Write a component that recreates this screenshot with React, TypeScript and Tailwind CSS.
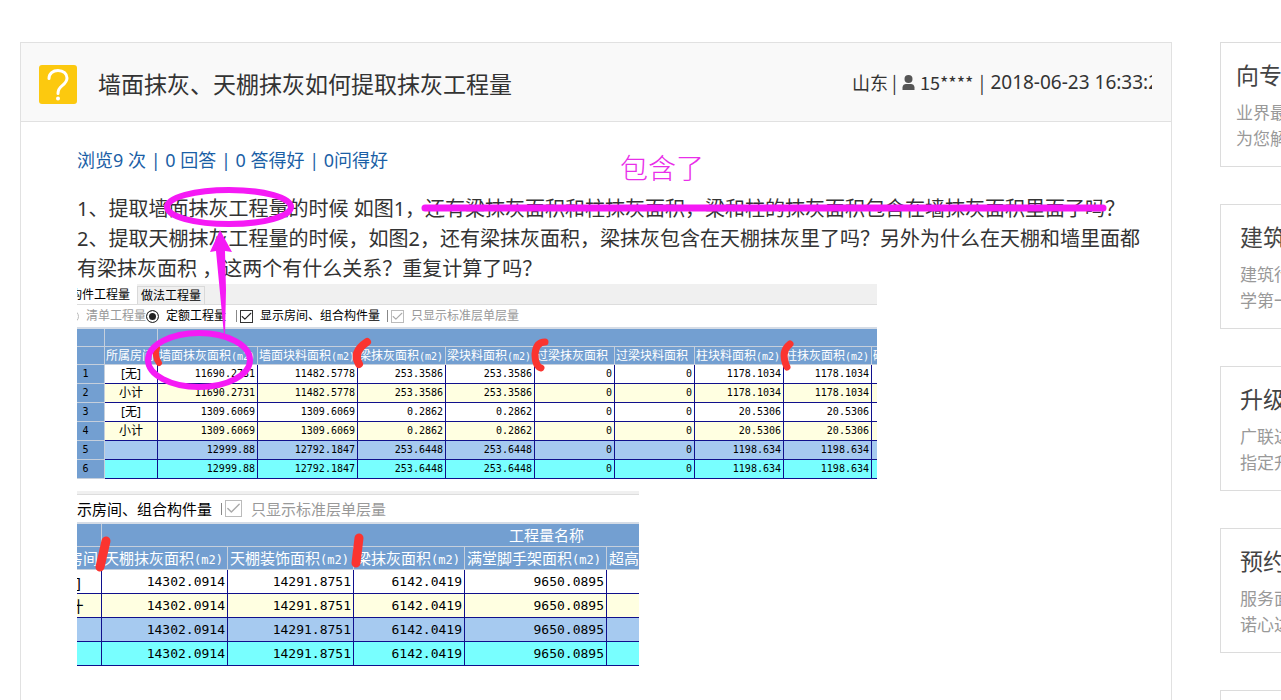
import React, { useState } from "react";
import { Check } from "lucide-react";
import clsx from "clsx";

type Tone = "plain" | "subtotal" | "floor" | "total";

type Row = { tone: Tone; cells: string[] };

type Column = { name: string; unit?: string; width: number };

const TONE_BG: Record<Tone, string> = {
  plain: "bg-white",
  subtotal: "bg-[#ffffe1]",
  floor: "bg-[#a6caf0]",
  total: "bg-[#78ffff]",
};

const WALL_COLUMNS: Column[] = [
  { name: "所属房间", width: 53 },
  { name: "墙面抹灰面积", unit: "(m2)", width: 100 },
  { name: "墙面块料面积", unit: "(m2)", width: 100 },
  { name: "梁抹灰面积", unit: "(m2)", width: 88 },
  { name: "梁块料面积", unit: "(m2)", width: 89 },
  { name: "过梁抹灰面积", width: 80 },
  { name: "过梁块料面积", width: 80 },
  { name: "柱块料面积", unit: "(m2)", width: 89 },
  { name: "柱抹灰面积", unit: "(m2)", width: 88 },
  { name: "砌", width: 20 },
];

const WALL_ROWS: Row[] = [
  { tone: "plain", cells: ["[无]", "11690.2731", "11482.5778", "253.3586", "253.3586", "0", "0", "1178.1034", "1178.1034", ""] },
  { tone: "subtotal", cells: ["小计", "11690.2731", "11482.5778", "253.3586", "253.3586", "0", "0", "1178.1034", "1178.1034", ""] },
  { tone: "plain", cells: ["[无]", "1309.6069", "1309.6069", "0.2862", "0.2862", "0", "0", "20.5306", "20.5306", ""] },
  { tone: "subtotal", cells: ["小计", "1309.6069", "1309.6069", "0.2862", "0.2862", "0", "0", "20.5306", "20.5306", ""] },
  { tone: "floor", cells: ["", "12999.88", "12792.1847", "253.6448", "253.6448", "0", "0", "1198.634", "1198.634", ""] },
  { tone: "total", cells: ["", "12999.88", "12792.1847", "253.6448", "253.6448", "0", "0", "1198.634", "1198.634", ""] },
];

const CEILING_COLUMNS: Column[] = [
  { name: "所属房间", width: 66 },
  { name: "天棚抹灰面积", unit: "(m2)", width: 126 },
  { name: "天棚装饰面积", unit: "(m2)", width: 126 },
  { name: "梁抹灰面积", unit: "(m2)", width: 111 },
  { name: "满堂脚手架面积", unit: "(m2)", width: 142 },
  { name: "超高", width: 384 },
];

const CEILING_ROWS: Row[] = [
  { tone: "plain", cells: ["[无]", "14302.0914", "14291.8751", "6142.0419", "9650.0895", ""] },
  { tone: "subtotal", cells: ["小计", "14302.0914", "14291.8751", "6142.0419", "9650.0895", ""] },
  { tone: "floor", cells: ["", "14302.0914", "14291.8751", "6142.0419", "9650.0895", ""] },
  { tone: "total", cells: ["", "14302.0914", "14291.8751", "6142.0419", "9650.0895", ""] },
];

const CARDS = [
  { title: "向专", lines: ["业界最", "为您解"], pad: "pl-[15px]" },
  { title: "建筑", lines: ["建筑行", "学第一"], pad: "pl-[19px]" },
  { title: "升级", lines: ["广联达", "指定升"], pad: "pl-[19px]" },
  { title: "预约", lines: ["服务面", "诺心达"], pad: "pl-[19px]" },
  { title: "", lines: [], pad: "pl-[19px]" },
];

export default function App() {
  return (
    <div className="relative flex h-screen gap-12 overflow-hidden bg-white pl-5 pt-[42px] font-['Noto_Sans','Noto_Sans_CJK_SC',sans-serif] text-[#333]">
      <article className="h-[900px] min-w-0 flex-1 border border-[#e1e1e1]">
        <QuestionHeader />
        <div className="pl-14 pr-5 pt-6">
          <p className="text-[18px] leading-7 text-[#1b5fa6]">浏览9 次 | 0 回答 | 0 答得好 | 0问得好</p>
          <div className="mt-5 text-[20px] leading-[30px]">
            <p>
              1、提取墙面抹灰工程量的时候 如图1，还有梁抹灰面积和柱抹灰面积，梁和柱的抹灰面积包含在墙抹灰面积里面了吗？
            </p>
            <p>
              2、提取天棚抹灰工程量的时候，如图2，还有梁抹灰面积，梁抹灰包含在天棚抹灰里了吗？另外为什么在天棚和墙里面都有梁抹灰面积 ，这两个有什么关系？重复计算了吗？
            </p>
          </div>
          <WallFigure />
          <CeilingFigure />
        </div>
      </article>

      <aside className="w-[61px] shrink-0 overflow-hidden">
        <div className="flex flex-col gap-[37px]">
          {CARDS.map((card, i) => (
            <section
              key={i}
              className={clsx("h-[125px] w-60 whitespace-nowrap border border-[#dcdcdc] pt-4", card.pad)}
            >
              <h2 className="mb-2 text-[23px] leading-[33px] text-[#444]">{card.title}</h2>
              {card.lines.map((line) => (
                <p key={line} className="text-[17px] leading-[26px] text-[#999]">
                  {line}
                </p>
              ))}
            </section>
          ))}
        </div>
      </aside>

      <Markup />
    </div>
  );
}

function QuestionHeader() {
  return (
    <header className="flex h-[79px] items-center border-b border-[#e1e1e1] bg-[#f9f9f9] pl-[18px] pr-[19px]">
      <svg viewBox="0 0 38 39" className="mt-1 h-[39px] w-[38px] shrink-0" aria-hidden="true">
        <rect width="38" height="39" rx="3" fill="#fcc90f" />
        <path
          d="M10 13.5C10 8.500 14 5.500 19 5.500C24.500 5.500 28 8.800 28 13C28 16.500 26 18.400 23.200 20.600C20.300 22.900 19 24.500 19 28.500"
          fill="none"
          stroke="#fff"
          strokeWidth="3"
          strokeLinecap="round"
        />
        <circle cx="19" cy="33.500" r="2" fill="#fff" />
      </svg>
      <h1 className="ml-[21px] mt-1 flex-1 whitespace-nowrap text-[23px] leading-8">
        墙面抹灰、天棚抹灰如何提取抹灰工程量
      </h1>
      <div className="flex w-[300px] items-center overflow-hidden whitespace-nowrap font-['Noto_Sans_CJK_SC',sans-serif] text-[18px] leading-7">
        <span>山东 |</span>
        <svg viewBox="0 0 13 15" className="mx-[5px] h-[15px] w-[13px] shrink-0" aria-hidden="true">
          <circle cx="6.500" cy="4" r="4" fill="#555" />
          <path d="M0.500 15V12.500C0.500 10 2.500 9 4 9H9C10.500 9 12.500 10 12.500 12.500V15Z" fill="#555" />
        </svg>
        <span>15****</span>
        <span className="mx-[6px]">|</span>
        <time className="font-['Noto_Sans',sans-serif] text-[19px]">2018-06-23 16:33:2</time>
      </div>
    </header>
  );
}

function WallFigure() {
  const [tab, setTab] = useState("构件工程量");
  return (
    <figure className="w-[800px] max-w-full overflow-hidden whitespace-nowrap text-[12px] leading-4 text-black">
      <div className="flex h-[21px] items-stretch border-b border-[#ddd] bg-[#f0f0f0]">
        {["构件工程量", "做法工程量"].map((name) => (
          <button
            key={name}
            type="button"
            onClick={() => setTab(name)}
            className={clsx(
              "w-[68px] shrink-0 pt-px first:-ml-[14px] first:w-[74px]",
              tab === name ? "bg-white" : "mt-[2px] border border-b-0 border-[#d9d9d9] bg-[#f0f0f0]",
            )}
          >
            {name}
          </button>
        ))}
      </div>
      <div className="flex h-6 items-center border-b-2 border-[#d5dce6]">
        <label className="-ml-[11px] flex items-center text-[#999]">
          <Radio muted />
          <span className="ml-[7px]">清单工程量</span>
        </label>
        <label className="flex items-center">
          <Radio defaultChecked />
          <span className="ml-[7px] w-[70px]">定额工程量</span>
        </label>
        <Separator />
        <label className="flex items-center">
          <Tick size="small" />
          <span className="ml-[7px] w-[127px]">显示房间、组合构件量</span>
        </label>
        <Separator />
        <label className="flex items-center text-[#999]">
          <Tick size="small" muted />
          <span className="ml-[7px]">只显示标准层单层量</span>
        </label>
      </div>
      <table className="w-[815px] table-fixed border-separate border-spacing-0">
        <colgroup>
          <col style={{ width: 28 }} />
          {WALL_COLUMNS.map((c) => (
            <col key={c.name} style={{ width: c.width }} />
          ))}
        </colgroup>
        <thead className="bg-[#739fd1] text-white">
          <tr>
            <th className="h-[18px] border-b border-r border-[#c5cfdc] p-0" />
            <th className="border-b border-r border-[#c5cfdc] p-0" />
            <th colSpan={9} className="border-b border-[#c5cfdc] p-0" />
          </tr>
          <tr>
            <th className="h-[18px] border-b border-r border-[#c5cfdc] p-0" />
            {WALL_COLUMNS.map((c) => (
              <th
                key={c.name}
                className="h-[18px] overflow-hidden border-b border-r border-[#c5cfdc] p-0 pl-px text-left font-normal leading-[17px]"
              >
                {c.name}
                {c.unit && (
                  <span className="font-['DejaVu_Sans_Mono',monospace] text-[10px] leading-none">{c.unit}</span>
                )}
              </th>
            ))}
          </tr>
        </thead>
        <tbody>
          {WALL_ROWS.map((row, i) => (
            <tr key={i} className={TONE_BG[row.tone]}>
              <th className="h-[19px] border-b border-r border-[#c5cfdc] bg-[#739fd1] p-0 pr-[10px] font-['DejaVu_Sans_Mono',monospace] text-[10px] font-normal leading-[18px]">
                {i + 1}
              </th>
              {row.cells.map((cell, j) => (
                <td
                  key={j}
                  className={clsx(
                    "h-[19px] border-b border-r border-[#10108c] p-0",
                    j === 0
                      ? "text-center text-[12px] leading-[18px]"
                      : "pr-[2px] text-right font-['DejaVu_Sans_Mono',monospace] text-[10px] leading-[18px]",
                  )}
                >
                  {cell}
                </td>
              ))}
            </tr>
          ))}
        </tbody>
      </table>
    </figure>
  );
}

function CeilingFigure() {
  return (
    <figure className="mt-3 w-[562px] max-w-full overflow-hidden whitespace-nowrap text-[15px] leading-5 text-black">
      <div className="h-1 border-b border-[#ddd] bg-[#f0f0f0]" />
      <div className="flex h-[29px] items-center border-b-2 border-[#d5dce6]">
        <span className="w-[144px]">示房间、组合构件量</span>
        <Separator />
        <label className="flex items-center text-[#999]">
          <Tick size="large" muted />
          <span className="ml-[9px]">只显示标准层单层量</span>
        </label>
      </div>
      {/* The first column is scrolled partly out of view */}
      <table className="-ml-[41px] w-[955px] table-fixed border-separate border-spacing-0">
        <colgroup>
          {CEILING_COLUMNS.map((c) => (
            <col key={c.name} style={{ width: c.width }} />
          ))}
        </colgroup>
        <thead className="bg-[#739fd1] text-white">
          <tr>
            <th className="h-[23px] border-b border-r border-[#c5cfdc] p-0" />
            <th colSpan={5} className="border-b border-[#c5cfdc] p-0 text-center font-normal leading-[22px]">
              工程量名称
            </th>
          </tr>
          <tr>
            {CEILING_COLUMNS.map((c) => (
              <th
                key={c.name}
                className="h-[23px] overflow-hidden border-b border-r border-[#c5cfdc] p-0 pl-[2px] text-left font-normal leading-[22px]"
              >
                {c.name}
                {c.unit && (
                  <span className="font-['DejaVu_Sans_Mono',monospace] text-[12px] leading-none">{c.unit}</span>
                )}
              </th>
            ))}
          </tr>
        </thead>
        <tbody>
          {CEILING_ROWS.map((row, i) => (
            <tr key={i} className={TONE_BG[row.tone]}>
              {row.cells.map((cell, j) => (
                <td
                  key={j}
                  className={clsx(
                    "h-6 border-b border-r border-[#10108c] p-0 leading-[22px]",
                    j === 0
                      ? "text-center text-[15px]"
                      : "pr-[2px] text-right font-['DejaVu_Sans_Mono',monospace] text-[13px]",
                  )}
                >
                  {cell}
                </td>
              ))}
            </tr>
          ))}
        </tbody>
      </table>
    </figure>
  );
}

function Separator() {
  return <span className="mr-[3px] h-3 w-px shrink-0 bg-[#888]" />;
}

function Radio({ muted, defaultChecked }: { muted?: boolean; defaultChecked?: boolean }) {
  return (
    <input
      type="radio"
      name="quantity-kind"
      defaultChecked={defaultChecked}
      className={clsx(
        "h-[13px] w-[13px] shrink-0 appearance-none rounded-full border bg-white checked:bg-[#222] checked:shadow-[inset_0_0_0_2px_white]",
        muted ? "border-[#bbb]" : "border-[#333]",
      )}
    />
  );
}

function Tick({ size, muted }: { size: "small" | "large"; muted?: boolean }) {
  const box = size === "small" ? "h-[13px] w-[13px]" : "h-[17px] w-[17px]";
  return (
    <span className="grid shrink-0">
      <input
        type="checkbox"
        defaultChecked
        className={clsx(
          "peer col-start-1 row-start-1 appearance-none border bg-white",
          box,
          muted ? "border-[#bbb]" : "border-[#333]",
        )}
      />
      <Check
        strokeWidth={2}
        className={clsx(
          "pointer-events-none invisible col-start-1 row-start-1 peer-checked:visible",
          box,
          muted ? "text-[#aaa]" : "text-[#222]",
        )}
      />
    </span>
  );
}

/** Hand-drawn pen marks lying over the question and both figures. */
function Markup() {
  return (
    <>
      <span className="pointer-events-none absolute left-[620px] top-[150px] text-[28px] font-light leading-9 text-[#e92fe9]">
        包含了
      </span>
      <svg
        className="pointer-events-none absolute left-0 top-0 h-[700px] w-[1281px]"
        viewBox="0 0 1281 700"
        fill="none"
        strokeLinecap="round"
        aria-hidden="true"
      >
        <g stroke="#fb3430">
          <path d="M157 348Q154 356 159 363" strokeWidth="6" />
          <path d="M367 342Q352 352 359 364" strokeWidth="8" />
          <path d="M545 342Q536 342 535 354Q535 366 541 368" strokeWidth="7" />
          <path d="M790 344Q780 352 787 367" strokeWidth="7" />
          <path d="M106 541L100 567" strokeWidth="9" />
          <path d="M359 538L356 563" strokeWidth="9" />
        </g>
        <g stroke="#f51af5">
          <ellipse cx="229" cy="207" rx="62" ry="17" strokeWidth="6" />
          <ellipse cx="199" cy="360" rx="51" ry="27" strokeWidth="6" />
          <path d="M425 208H1103" strokeWidth="7" />
        </g>
        <path d="M220 230L232 252L225 251L226 290L225 335H224L216 251L210 252Z" fill="#f51af5" />
      </svg>
    </>
  );
}
